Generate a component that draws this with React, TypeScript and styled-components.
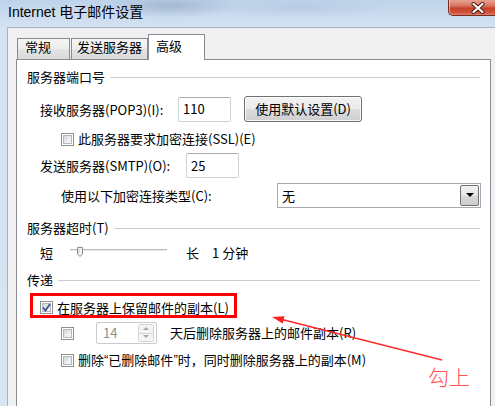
import React from "react";
import styled, { createGlobalStyle } from "styled-components";

const Global = createGlobalStyle`
  html, body { margin: 0; padding: 0; background: #f0f0f0; }
  body {
    width: 495px; height: 406px; overflow: hidden;
    font-family: "Noto Sans CJK SC", "Noto Sans", sans-serif;
    font-size: 13px; color: #000;
  }
  * { box-sizing: border-box; }
`;

const Window = styled.div`
  position: relative;
  width: 495px;
  height: 406px;
  overflow: hidden;
  display: flex;
  flex-direction: column;
  background:
    radial-gradient(ellipse 70px 12px at 170px 6px, rgba(110, 130, 160, 0.35), transparent),
    radial-gradient(ellipse 90px 10px at 300px 8px, rgba(150, 170, 195, 0.25), transparent),
    linear-gradient(to bottom, #bed3eb 0px, #c8daee 12px, #d4e2f2 27px, #d7e4f2 100%);
`;

const TitleBar = styled.div`
  height: 27px;
  flex: none;
  display: flex;
  justify-content: space-between;
  align-items: flex-start;
`;

const TitleText = styled.div`
  padding-left: 8px;
  padding-top: 3px;
  line-height: 18px;
  font-size: 14px;
  font-family: "Liberation Sans", "Noto Sans CJK SC", sans-serif;
  color: #000;
`;

const CloseButton = styled.div`
  width: 47px;
  height: 16px;
  display: flex;
  align-items: center;
  justify-content: center;
  padding-left: 12px;
  border: 1px solid #7a2c22;
  border-top: none;
  border-right: none;
  border-radius: 0 0 0 5px;
  background: linear-gradient(to bottom, #e6a394 0%, #d8715f 40%, #c63f2a 55%, #cf5440 85%, #e0826a 100%);
  box-shadow: inset 1px 0 0 rgba(255, 255, 255, 0.45);
`;

const Frame = styled.div`
  flex: 1;
  display: flex;
  min-height: 0;
`;

const FrameEdge = styled.div`
  width: 7px;
  flex: none;
`;

const Client = styled.div`
  flex: 1;
  display: flex;
  flex-direction: column;
  background: #f0f0f0;
  border-top: 1px solid #a3b2c4;
  border-left: 1px solid #a3b2c4;
  padding: 6px 4px 0 8px;
  min-height: 0;
`;

const TabStrip = styled.div`
  height: 25px;
  flex: none;
  display: flex;
  align-items: flex-end;
  position: relative;
  z-index: 1;
`;

const Tab = styled.div<{ $active?: boolean; $w: number; $ml: number; $pl: number }>`
  width: ${(p) => p.$w}px;
  margin-left: ${(p) => p.$ml}px;
  padding-left: ${(p) => p.$pl}px;
  height: ${(p) => (p.$active ? 26 : 21)}px;
  margin-bottom: ${(p) => (p.$active ? -1 : 0)}px;
  padding-top: ${(p) => (p.$active ? 3 : 0)}px;
  line-height: 16px;
  font-size: 13px;
  white-space: nowrap;
  border: 1px solid #898c95;
  border-bottom: none;
  background: ${(p) =>
    p.$active
      ? "#ffffff"
      : "linear-gradient(to bottom, #f5f5f5 0%, #ededed 50%, #e3e3e3 51%, #dadada 100%)"};
`;

const Panel = styled.div`
  flex: 1;
  background: #fff;
  border: 1px solid #898c95;
  border-bottom: none;
  padding: 9px 10px 0 10px;
  display: flex;
  flex-direction: column;
`;

const GroupHeader = styled.div<{ $mt: number }>`
  margin-top: ${(p) => p.$mt}px;
  height: 16px;
  line-height: 16px;
  display: flex;
  align-items: center;
  white-space: nowrap;
`;

const GroupLine = styled.div`
  flex: 1;
  height: 1px;
  margin-left: 5px;
  background: #c9ced3;
`;

const Row = styled.div<{ $mt: number; $h: number; $indent: number }>`
  margin-top: ${(p) => p.$mt}px;
  height: ${(p) => p.$h}px;
  padding-left: ${(p) => p.$indent}px;
  display: flex;
  align-items: center;
  line-height: 16px;
  white-space: nowrap;
`;

const FieldLabel = styled.span<{ $w: number }>`
  width: ${(p) => p.$w}px;
  flex: none;
  padding-top: 1px;
`;

const TextBox = styled.div<{ $w: number; $h: number }>`
  width: ${(p) => p.$w}px;
  height: ${(p) => p.$h}px;
  flex: none;
  border: 1px solid #cdd2d8;
  border-top-color: #abadb3;
  border-radius: 2px;
  background: #fff;
  padding-left: 4px;
  display: flex;
  align-items: center;
`;

const PushButton = styled.div`
  width: 118px;
  height: 26px;
  margin-left: 13px;
  flex: none;
  border: 1px solid #707070;
  border-radius: 3px;
  background: linear-gradient(to bottom, #f2f2f2 0%, #ebebeb 50%, #dddddd 51%, #cfcfcf 100%);
  box-shadow: inset 0 0 0 1px rgba(255, 255, 255, 0.8);
  display: flex;
  align-items: center;
  justify-content: center;
`;

const Combo = styled.div`
  width: 204px;
  height: 25px;
  margin-left: auto;
  margin-right: -1px;
  flex: none;
  border: 1px solid #a6a9b0;
  background: #fff;
  padding: 0 1px 0 4px;
  display: flex;
  align-items: center;
  justify-content: space-between;
`;

const ComboArrow = styled.div`
  width: 19px;
  height: 21px;
  border: 1px solid #707070;
  border-radius: 2px;
  background: linear-gradient(to bottom, #f2f2f2 0%, #e6e6e6 50%, #d8d8d8 51%, #cdcdcd 100%);
  display: flex;
  align-items: center;
  justify-content: center;
`;

const CheckBox = styled.span<{ $mr: number }>`
  position: relative;
  width: 13px;
  height: 13px;
  flex: none;
  margin-right: ${(p) => p.$mr}px;
  border: 1px solid #8e8f8f;
  background: #fff;
  display: inline-flex;
  align-items: center;
  justify-content: center;
  &::before {
    content: "";
    position: absolute;
    inset: 1px;
    border: 1px solid #b3b8bf;
    background: linear-gradient(135deg, #d3d6db 0%, #eceef0 60%, #f8f8f8 100%);
  }
  svg { position: relative; }
`;

const SideText = styled.span<{ $ml: number }>`
  margin-left: ${(p) => p.$ml}px;
`;

const Quote = styled.span`
  font-family: "Liberation Sans", sans-serif;
`;

const RedBox = styled.div`
  width: 207px;
  height: 25px;
  border: 3px solid #ff0000;
  padding: 4px 0 0 7px;
  display: flex;
  align-items: center;
`;

const SpinBox = styled.div`
  width: 61px;
  height: 22px;
  flex: none;
  margin-right: 13px;
  border: 1px solid #c9cbcf;
  border-radius: 2px;
  background: #fff;
  padding: 1px 2px 1px 6px;
  display: flex;
  align-items: center;
  justify-content: space-between;
  color: #8d8d8d;
`;

const SpinButtons = styled.div`
  width: 16px;
  height: 18px;
  display: flex;
  flex-direction: column;
  border: 1px solid #d3d5d8;
  border-radius: 2px;
`;

const SpinHalf = styled.div<{ $top?: boolean }>`
  flex: 1;
  background: #f4f4f4;
  border-bottom: ${(p) => (p.$top ? "1px solid #d3d5d8" : "none")};
  display: flex;
  align-items: center;
  justify-content: center;
`;

const Overlay = styled.svg`
  position: absolute;
  left: 0;
  top: 0;
  pointer-events: none;
`;

const Annotation = styled.div`
  position: absolute;
  left: 428px;
  top: 365px;
  font-size: 21px;
  line-height: 22px;
  font-weight: 300;
  color: #ff5252;
`;

const Check = () => (
  <svg width="9" height="9" viewBox="0 0 9 9">
    <path d="M1 4.5 L3.5 7.5 L8 1" fill="none" stroke="#3c4f8c" strokeWidth="1.7" />
  </svg>
);

const Triangle = ({ up, color, w }: { up?: boolean; color: string; w: number }) => (
  <svg width={w} height={w / 2 + 1} viewBox={`0 0 ${w} ${w / 2 + 1}`}>
    <path
      d={up ? `M0 ${w / 2} L${w / 2} 0 L${w} ${w / 2} Z` : `M0 0 L${w} 0 L${w / 2} ${w / 2} Z`}
      fill={color}
    />
  </svg>
);

export default function App() {
  return (
    <>
      <Global />
      <Window>
        <TitleBar>
          <TitleText>Internet 电子邮件设置</TitleText>
          <CloseButton>
            <svg width="14" height="12" viewBox="0 0 14 12">
              <path d="M2.5 2 L11.5 10 M11.5 2 L2.5 10" stroke="#4a1a14" strokeWidth="4" strokeLinecap="round" />
              <path d="M2.5 2 L11.5 10 M11.5 2 L2.5 10" stroke="#ffffff" strokeWidth="2.2" strokeLinecap="round" />
            </svg>
          </CloseButton>
        </TitleBar>
        <Frame>
          <FrameEdge />
          <Client>
            <TabStrip>
              <Tab $w={53} $ml={1} $pl={7}>常规</Tab>
              <Tab $w={77} $ml={1} $pl={5}>发送服务器</Tab>
              <Tab $active $w={57} $ml={0} $pl={7}>高级</Tab>
            </TabStrip>
            <Panel>
              <GroupHeader $mt={0}>
                服务器端口号
                <GroupLine />
              </GroupHeader>
              <Row $mt={11} $h={26} $indent={13}>
                <FieldLabel $w={138}>接收服务器(POP3)(I):</FieldLabel>
                <TextBox $w={53} $h={25}>110</TextBox>
                <PushButton>使用默认设置(D)</PushButton>
              </Row>
              <Row $mt={9} $h={16} $indent={34}>
                <CheckBox $mr={4} />
                此服务器要求加密连接(SSL)(E)
              </Row>
              <Row $mt={6} $h={25} $indent={13}>
                <FieldLabel $w={146}>发送服务器(SMTP)(O):</FieldLabel>
                <TextBox $w={53} $h={25}>25</TextBox>
              </Row>
              <Row $mt={5} $h={25} $indent={34}>
                <FieldLabel $w={150}>使用以下加密连接类型(C):</FieldLabel>
                <Combo>
                  无
                  <ComboArrow>
                    <Triangle color="#000" w={8} />
                  </ComboArrow>
                </Combo>
              </Row>
              <GroupHeader $mt={12}>
                服务器超时(T)
                <GroupLine />
              </GroupHeader>
              <Row $mt={9} $h={16} $indent={13}>
                短
                <svg width="97" height="16" viewBox="0 0 97 16" style={{ marginLeft: 17, flex: "none" }}>
                  <rect x="0" y="4" width="97" height="1" fill="#b9b9b9" />
                  <rect x="0" y="5" width="97" height="1" fill="#ececec" />
                  <path d="M7.5 2.5 h5 v6.5 l-2.5 2.5 l-2.5 -2.5 z" fill="#f3f3f3" stroke="#8c8c8c" />
                  <path d="M9 4 v4" stroke="#c8c8c8" />
                </svg>
                <SideText $ml={19}>长</SideText>
                <SideText $ml={13}>1 分钟</SideText>
              </Row>
              <GroupHeader $mt={11}>
                传递
                <GroupLine />
              </GroupHeader>
              <Row $mt={5} $h={25} $indent={3}>
                <RedBox>
                  <CheckBox $mr={4}>
                    <Check />
                  </CheckBox>
                  在服务器上保留邮件的副本(L)
                </RedBox>
              </Row>
              <Row $mt={4} $h={22} $indent={34}>
                <CheckBox $mr={22} />
                <SpinBox>
                  14
                  <SpinButtons>
                    <SpinHalf $top>
                      <Triangle up color="#a7a7a7" w={6} />
                    </SpinHalf>
                    <SpinHalf>
                      <Triangle color="#a7a7a7" w={6} />
                    </SpinHalf>
                  </SpinButtons>
                </SpinBox>
                天后删除服务器上的邮件副本(R)
              </Row>
              <Row $mt={8} $h={16} $indent={34}>
                <CheckBox $mr={4} />
                删除<Quote>“</Quote>已删除邮件<Quote>”</Quote>时，同时删除服务器上的副本(M)
              </Row>
            </Panel>
          </Client>
        </Frame>
        <Overlay width="495" height="406" viewBox="0 0 495 406">
          <path d="M442 360 L280 319" stroke="#ff2a2a" strokeWidth="1.3" fill="none" />
          <path d="M272 317 L284.5 316.3 L282.8 323.5 Z" fill="#ff2020" />
        </Overlay>
        <Annotation>勾上</Annotation>
      </Window>
    </>
  );
}
